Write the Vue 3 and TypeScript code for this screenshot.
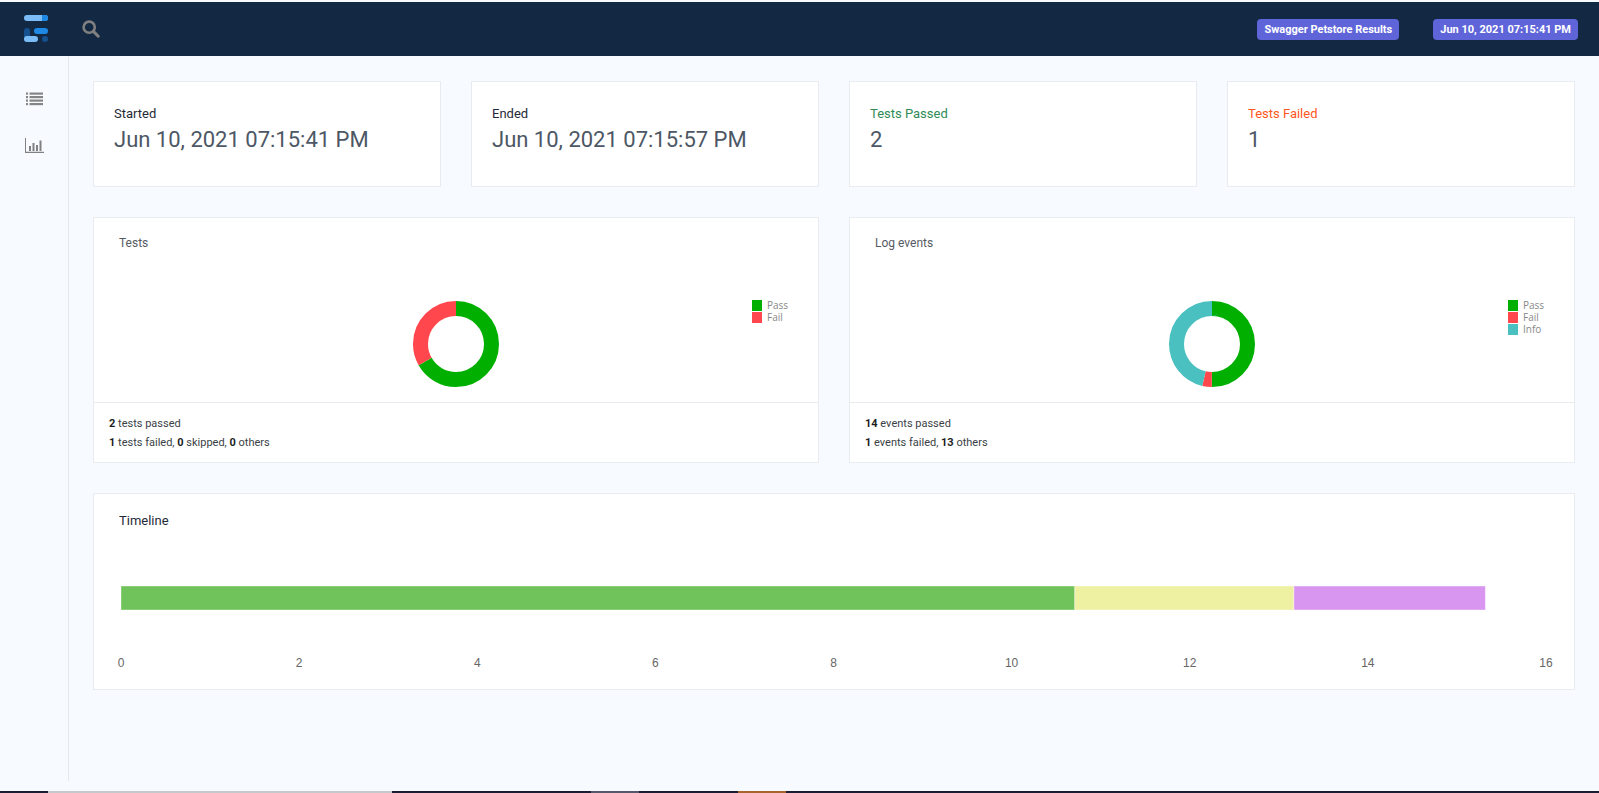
<script setup lang="ts">
type Stat = { label: string; value: string; tone?: string };
type Slice = { name: string; count: number; color: string };
type Panel = { title: string; slices: Slice[]; lines: { n?: number; text: string }[][] };

const PASS = "#00af00";
const FAIL = "#ff474d";
const INFO = "#4ac0c0";

const stats: Stat[] = [
  { label: "Started", value: "Jun 10, 2021 07:15:41 PM" },
  { label: "Ended", value: "Jun 10, 2021 07:15:57 PM" },
  { label: "Tests Passed", value: "2", tone: "pass" },
  { label: "Tests Failed", value: "1", tone: "fail" },
];

const panels: Panel[] = [
  {
    title: "Tests",
    slices: [
      { name: "Pass", count: 2, color: PASS },
      { name: "Fail", count: 1, color: FAIL },
    ],
    lines: [
      [{ n: 2, text: " tests passed" }],
      [
        { n: 1, text: " tests failed, " },
        { n: 0, text: " skipped, " },
        { n: 0, text: " others" },
      ],
    ],
  },
  {
    title: "Log events",
    slices: [
      { name: "Pass", count: 14, color: PASS },
      { name: "Fail", count: 1, color: FAIL },
      { name: "Info", count: 13, color: INFO },
    ],
    lines: [
      [{ n: 14, text: " events passed" }],
      [
        { n: 1, text: " events failed, " },
        { n: 13, text: " others" },
      ],
    ],
  },
];

const RADIUS = 35.5;
const CIRC = 2 * Math.PI * RADIUS;

function arcs(slices: Slice[]) {
  const total = slices.reduce((s, x) => s + x.count, 0);
  let used = 0;
  return slices.map((s) => {
    const len = (s.count / total) * CIRC;
    const arc = { color: s.color, dash: `${len} ${CIRC - len}`, offset: -used };
    used += len;
    return arc;
  });
}

const ticks = [0, 2, 4, 6, 8, 10, 12, 14, 16];
const PX_PER_UNIT = 89.06;
const segments = [
  { start: 0, end: 10.71, color: "#6fc35a" },
  { start: 10.71, end: 13.17, color: "#eef1a2" },
  { start: 13.17, end: 15.32, color: "#d896f0" },
];
</script>

<template>
  <div class="page">
    <header class="topbar">
      <div class="brand">
        <svg width="26" height="34" viewBox="0 0 26 34" aria-label="logo">
          <rect x="1" y="3" width="24" height="6" rx="3" fill="#7bbcf6" />
          <path d="M19 3h3a3 3 0 0 1 0 6h-3z" fill="#1e88e5" />
          <rect x="11" y="16" width="14" height="6" rx="3" fill="#1e88e5" />
          <rect x="1" y="16" width="6" height="14" rx="3" fill="#15508f" />
          <rect x="1" y="24" width="14" height="6" rx="3" fill="#7bbcf6" />
          <circle cx="22" cy="27" r="3" fill="#15508f" />
        </svg>
      </div>
      <svg class="search" width="18" height="18" viewBox="0 0 18 18" aria-label="search">
        <circle cx="7.2" cy="7.2" r="5.6" fill="none" stroke="#808080" stroke-width="2.6" />
        <path d="M11.4 11.4L16.2 16.2" stroke="#808080" stroke-width="3" stroke-linecap="round" />
      </svg>
      <div class="badges">
        <span class="badge">Swagger Petstore Results</span>
        <span class="badge">Jun 10, 2021 07:15:41 PM</span>
      </div>
    </header>

    <div class="body">
      <aside class="sidebar">
        <svg width="17" height="14" viewBox="0 0 17 14" fill="#858585">
          <rect x="0" y="0.5" width="2" height="2.2" />
          <rect x="3.5" y="0.5" width="13.5" height="2.2" />
          <rect x="0" y="4" width="2" height="2.2" />
          <rect x="3.5" y="4" width="13.5" height="2.2" />
          <rect x="0" y="7.5" width="2" height="2.2" />
          <rect x="3.5" y="7.5" width="13.5" height="2.2" />
          <rect x="0" y="11" width="2" height="2.2" />
          <rect x="3.5" y="11" width="13.5" height="2.2" />
        </svg>
        <svg width="19" height="15" viewBox="0 0 19 15" fill="#808080">
          <path d="M0 0h1v13.7h18.500V15H0z" />
          <rect x="4" y="8" width="2" height="5" />
          <rect x="7.500" y="5" width="2" height="8" />
          <rect x="11" y="7" width="2" height="6" />
          <rect x="14.500" y="2.500" width="2" height="10.500" />
        </svg>
      </aside>

      <main class="content">
        <section class="stats">
          <div v-for="s in stats" :key="s.label" class="card stat">
            <p class="stat-label" :class="s.tone">{{ s.label }}</p>
            <p class="stat-value">{{ s.value }}</p>
          </div>
        </section>

        <section class="panels">
          <div v-for="p in panels" :key="p.title" class="card panel">
            <h6 class="panel-title">{{ p.title }}</h6>
            <svg class="donut" width="100%" height="137">
              <g transform="translate(0 0)">
                <svg x="50%" overflow="visible">
                  <g transform="translate(0 78) rotate(-90)">
                    <circle
                      v-for="a in arcs(p.slices)"
                      :key="a.color"
                      r="35.5"
                      fill="none"
                      :stroke="a.color"
                      stroke-width="15"
                      :stroke-dasharray="a.dash"
                      :stroke-dashoffset="a.offset"
                    />
                  </g>
                </svg>
              </g>
              <g class="legend">
                <svg x="100%" overflow="visible">
                  <g v-for="(s, i) in p.slices" :key="s.name" :transform="`translate(-66 ${34 + i * 12})`">
                    <rect width="10" height="11" :fill="s.color" />
                    <text x="15" y="9">{{ s.name }}</text>
                  </g>
                </svg>
              </g>
            </svg>
            <div class="panel-foot">
              <p v-for="(line, i) in p.lines" :key="i">
                <template v-for="(part, j) in line" :key="j"><b>{{ part.n }}</b>{{ part.text }}</template>
              </p>
            </div>
          </div>
        </section>

        <section class="card timeline">
          <h6 class="timeline-title">Timeline</h6>
          <svg class="timeline-chart" width="100%" height="130">
            <g transform="translate(27 0)">
              <rect
                v-for="seg in segments"
                :key="seg.color"
                :x="seg.start * PX_PER_UNIT"
                y="41"
                :width="(seg.end - seg.start) * PX_PER_UNIT"
                height="24"
                :fill="seg.color"
                stroke="#fff"
                stroke-opacity="0.4"
              />
              <text
                v-for="t in ticks"
                :key="t"
                :x="t * PX_PER_UNIT"
                y="122"
                text-anchor="middle"
              >{{ t }}</text>
            </g>
          </svg>
        </section>
      </main>
    </div>

    <footer class="taskbar">
      <span class="task task-a"></span>
      <span class="task task-b"></span>
      <span class="task task-c"></span>
    </footer>
  </div>
</template>

<style scoped>
.page {
  height: 793px;
  display: flex;
  flex-direction: column;
  padding-top: 2px;
  box-sizing: border-box;
  background: #f7faff;
  font-family: Roboto, "Liberation Sans", sans-serif;
  overflow: hidden;
}
.topbar {
  flex: none;
  height: 54px;
  display: flex;
  align-items: center;
  background: #132843;
  padding-right: 21px;
}
.brand {
  width: 82px;
  padding-left: 23px;
  box-sizing: border-box;
  display: flex;
}
.search {
  flex: none;
}
.badges {
  margin-left: auto;
  display: flex;
  gap: 34px;
}
.badge {
  height: 21px;
  line-height: 21px;
  padding: 0 7px;
  border-radius: 4px;
  background: #5f65d9;
  color: #fff;
  font-size: 11px;
  font-weight: 700;
  white-space: nowrap;
}
.body {
  flex: 1;
  min-height: 0;
  display: flex;
}
.sidebar {
  flex: none;
  width: 69px;
  height: 725px;
  box-sizing: border-box;
  border-right: 1px solid #e3e8ee;
  display: flex;
  flex-direction: column;
  align-items: center;
  gap: 32px;
  padding-top: 36px;
}
.content {
  flex: 1;
  min-width: 0;
  padding: 25px 24px 0;
  display: flex;
  flex-direction: column;
  gap: 30px;
}
.card {
  background: #fff;
  border: 1px solid #e8ebef;
  box-sizing: border-box;
}
.stats {
  display: grid;
  grid-template-columns: repeat(4, minmax(0, 1fr));
  gap: 30px;
}
.stat {
  height: 106px;
  padding: 23px 20px 0;
}
.stat-label {
  margin: 0;
  font-size: 13px;
  line-height: 17px;
  color: #1f2a36;
}
.stat-label.pass {
  color: #2e8b57;
}
.stat-label.fail {
  color: #ff5722;
}
.stat-value {
  margin: 4px 0 0;
  font-size: 22px;
  line-height: 28px;
  color: #4d5765;
}
.panels {
  display: grid;
  grid-template-columns: repeat(2, minmax(0, 1fr));
  gap: 30px;
}
.panel {
  height: 246px;
  display: flex;
  flex-direction: column;
}
.panel-title {
  margin: 0;
  height: 48px;
  padding: 17px 25px 0;
  box-sizing: border-box;
  font-size: 12px;
  line-height: 16px;
  font-weight: 400;
  color: #555b64;
}
.donut {
  display: block;
  flex: 1;
  min-height: 0;
}
.legend text {
  font-family: "Open Sans", sans-serif;
  font-size: 10px;
  fill: #888;
}
.panel-foot {
  flex: none;
  height: 60px;
  box-sizing: border-box;
  border-top: 1px solid #e8ebef;
  padding: 11px 15px 0;
  font-size: 11px;
  line-height: 19px;
  color: #3a3f46;
}
.panel-foot p {
  margin: 0;
}
.panel-foot b {
  color: #1b1f24;
}
.timeline {
  height: 197px;
  display: flex;
  flex-direction: column;
}
.timeline-title {
  margin: 0;
  height: 66px;
  padding: 18px 25px 0;
  box-sizing: border-box;
  font-size: 13px;
  line-height: 17px;
  font-weight: 400;
  color: #1f2a36;
}
.timeline-chart {
  display: block;
  margin-top: -15px;
}
.timeline-chart text {
  font-family: "Liberation Sans", Arial, sans-serif;
  font-size: 12px;
  fill: #666;
}
.taskbar {
  flex: none;
  height: 2px;
  display: flex;
  background: #1a1d33;
  margin-top: auto;
}
.task {
  display: block;
}
.task-a {
  width: 344px;
  margin-left: 48px;
  background: #c5c9cc;
}
.task-b {
  width: 48px;
  margin-left: 199px;
  background: #55576a;
}
.task-c {
  width: 48px;
  margin-left: 99px;
  background: #a8642c;
}
</style>

<style>
html,
body {
  margin: 0;
  background: #f7faff;
}
</style>
